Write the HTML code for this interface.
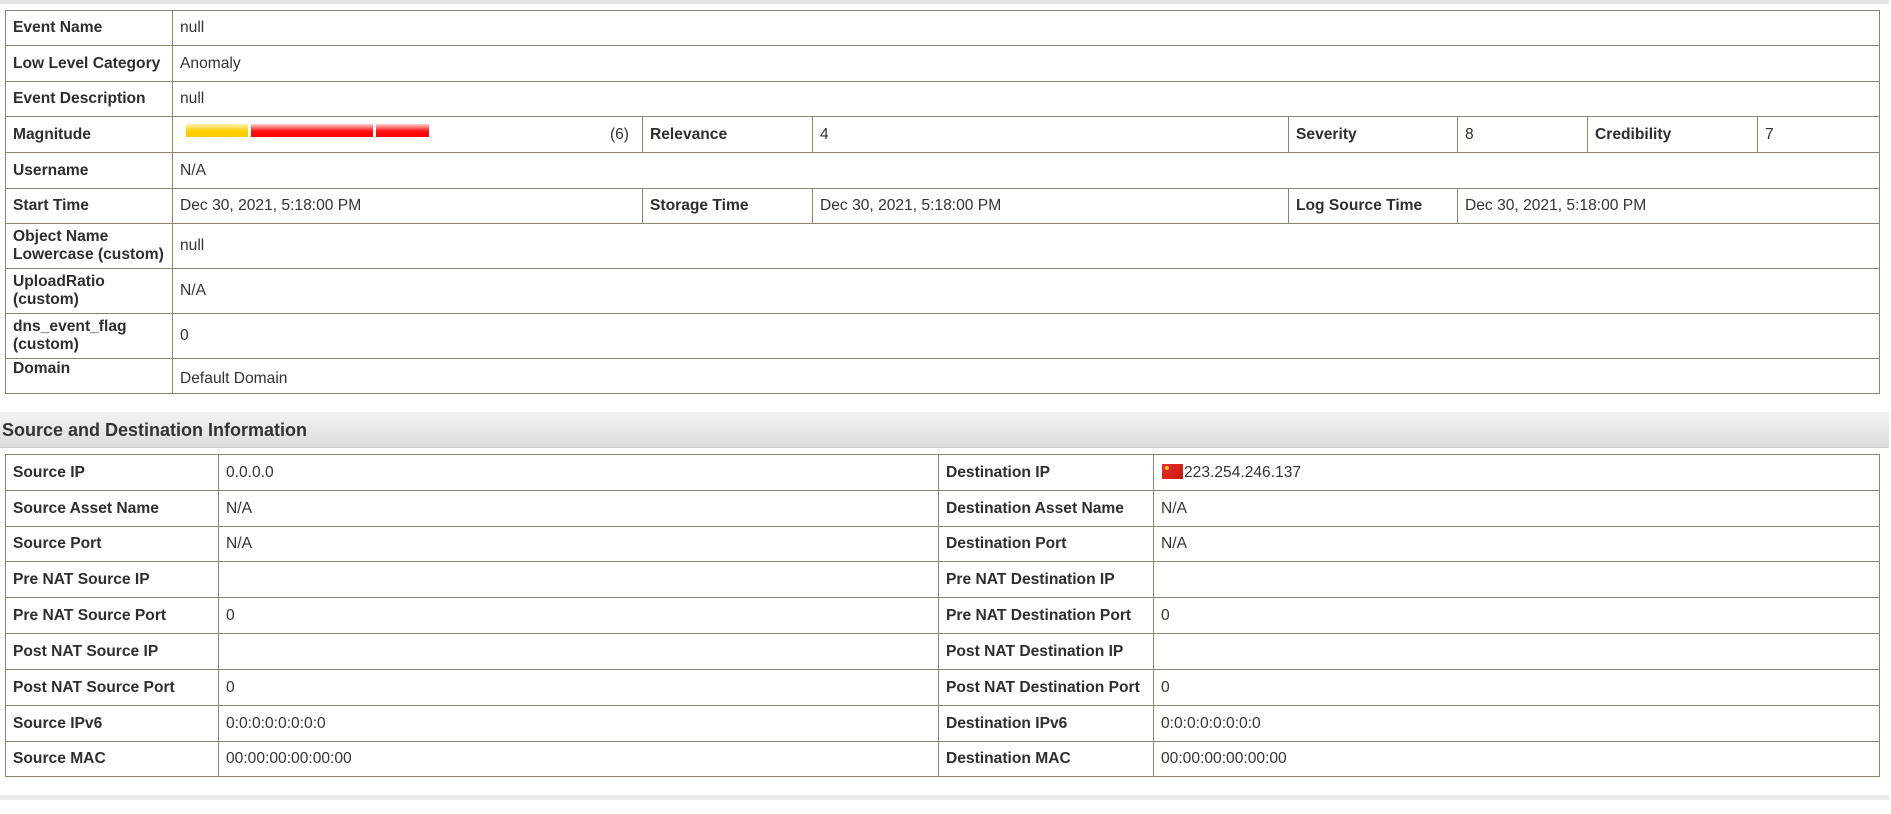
<!DOCTYPE html>
<html><head><meta charset="utf-8"><style>
body{margin:0;background:#fff;width:1891px;height:814px;overflow:hidden;font-family:"Liberation Sans",Arial,sans-serif;color:#333;font-size:15.6px;position:relative}
.topbar{position:absolute;left:0;top:0;width:1889px;height:4px;background:#e4e4e4}
table{position:absolute;border-collapse:collapse;table-layout:fixed}
td{border:1px solid #8a8474;padding:0 0 0 7px;vertical-align:middle;line-height:18px;white-space:nowrap;overflow:hidden}
td.l{font-weight:bold;color:#2e2e2e}
#t1{left:5px;top:10px;width:1874px}
#t2{left:5px;top:454px;width:1874px}
.hdr{position:absolute;left:0;top:412px;width:1889px;height:36px;background:linear-gradient(#f3f3f3,#dcdcdc);border-bottom:1px solid #d0d0d0;font-weight:bold;font-size:18px;line-height:36px;padding-left:2px;box-sizing:border-box;color:#333}
.bot{position:absolute;left:0;top:795px;width:1889px;height:5px;background:#ececec}
.bar{position:absolute;top:7px;height:13px}
.y{background:linear-gradient(#fff0b0,#ffd000 55%,#ffcc00)}
.r{background:linear-gradient(#ffd0d0,#ff1010 55%,#ff0000)}
.flag{display:inline-block;width:21px;height:15px;background:linear-gradient(135deg,#e8302a,#c81810);vertical-align:-2px;margin-right:1px;position:relative}
.flag:after{content:"";position:absolute;left:3px;top:2px;width:4px;height:4px;background:#f5d000;border-radius:50%}
</style></head><body>
<div class="topbar"></div>
<table id="t1">
<colgroup><col style="width:167px"><col style="width:470px"><col style="width:170px"><col style="width:476px"><col style="width:169px"><col style="width:130px"><col style="width:170px"><col style="width:122px"></colgroup>
<tr style="height:35px"><td class="l">Event Name</td><td colspan="7">null</td></tr>
<tr style="height:36px"><td class="l">Low Level Category</td><td colspan="7">Anomaly</td></tr>
<tr style="height:35px"><td class="l">Event Description</td><td colspan="7">null</td></tr>
<tr style="height:36px"><td class="l">Magnitude</td><td style="position:relative"><div style="position:relative;height:18px"><span class="bar y" style="left:6px;top:-2px;width:62px"></span><span class="bar r" style="left:71px;top:-2px;width:122px"></span><span class="bar r" style="left:196px;top:-2px;width:53px"></span><span style="position:absolute;right:13px;top:0">(6)</span></div></td><td class="l">Relevance</td><td>4</td><td class="l">Severity</td><td>8</td><td class="l">Credibility</td><td>7</td></tr>
<tr style="height:36px"><td class="l">Username</td><td colspan="7">N/A</td></tr>
<tr style="height:35px"><td class="l">Start Time</td><td>Dec 30, 2021, 5:18:00 PM</td><td class="l">Storage Time</td><td>Dec 30, 2021, 5:18:00 PM</td><td class="l">Log Source Time</td><td colspan="3">Dec 30, 2021, 5:18:00 PM</td></tr>
<tr style="height:45px"><td class="l">Object Name<br>Lowercase (custom)</td><td colspan="7">null</td></tr>
<tr style="height:45px"><td class="l">UploadRatio<br>(custom)</td><td colspan="7">N/A</td></tr>
<tr style="height:45px"><td class="l">dns_event_flag<br>(custom)</td><td colspan="7">0</td></tr>
<tr style="height:35px"><td class="l" style="vertical-align:top;padding-top:1px">Domain</td><td colspan="7" style="padding-top:6px">Default Domain</td></tr>
</table>
<div class="hdr">Source and Destination Information</div>
<table id="t2">
<colgroup><col style="width:213px"><col style="width:720px"><col style="width:215px"><col style="width:726px"></colgroup>
<tr style="height:36px"><td class="l">Source IP</td><td>0.0.0.0</td><td class="l">Destination IP</td><td style="padding-left:8px"><span class="flag"></span>223.254.246.137</td></tr>
<tr style="height:36px"><td class="l">Source Asset Name</td><td>N/A</td><td class="l">Destination Asset Name</td><td>N/A</td></tr>
<tr style="height:35px"><td class="l">Source Port</td><td>N/A</td><td class="l">Destination Port</td><td>N/A</td></tr>
<tr style="height:36px"><td class="l">Pre NAT Source IP</td><td></td><td class="l">Pre NAT Destination IP</td><td></td></tr>
<tr style="height:36px"><td class="l">Pre NAT Source Port</td><td>0</td><td class="l">Pre NAT Destination Port</td><td>0</td></tr>
<tr style="height:36px"><td class="l">Post NAT Source IP</td><td></td><td class="l">Post NAT Destination IP</td><td></td></tr>
<tr style="height:36px"><td class="l">Post NAT Source Port</td><td>0</td><td class="l">Post NAT Destination Port</td><td>0</td></tr>
<tr style="height:36px"><td class="l">Source IPv6</td><td>0:0:0:0:0:0:0:0</td><td class="l">Destination IPv6</td><td>0:0:0:0:0:0:0:0</td></tr>
<tr style="height:35px"><td class="l">Source MAC</td><td>00:00:00:00:00:00</td><td class="l">Destination MAC</td><td>00:00:00:00:00:00</td></tr>
</table>
<div class="bot"></div>
</body></html>
